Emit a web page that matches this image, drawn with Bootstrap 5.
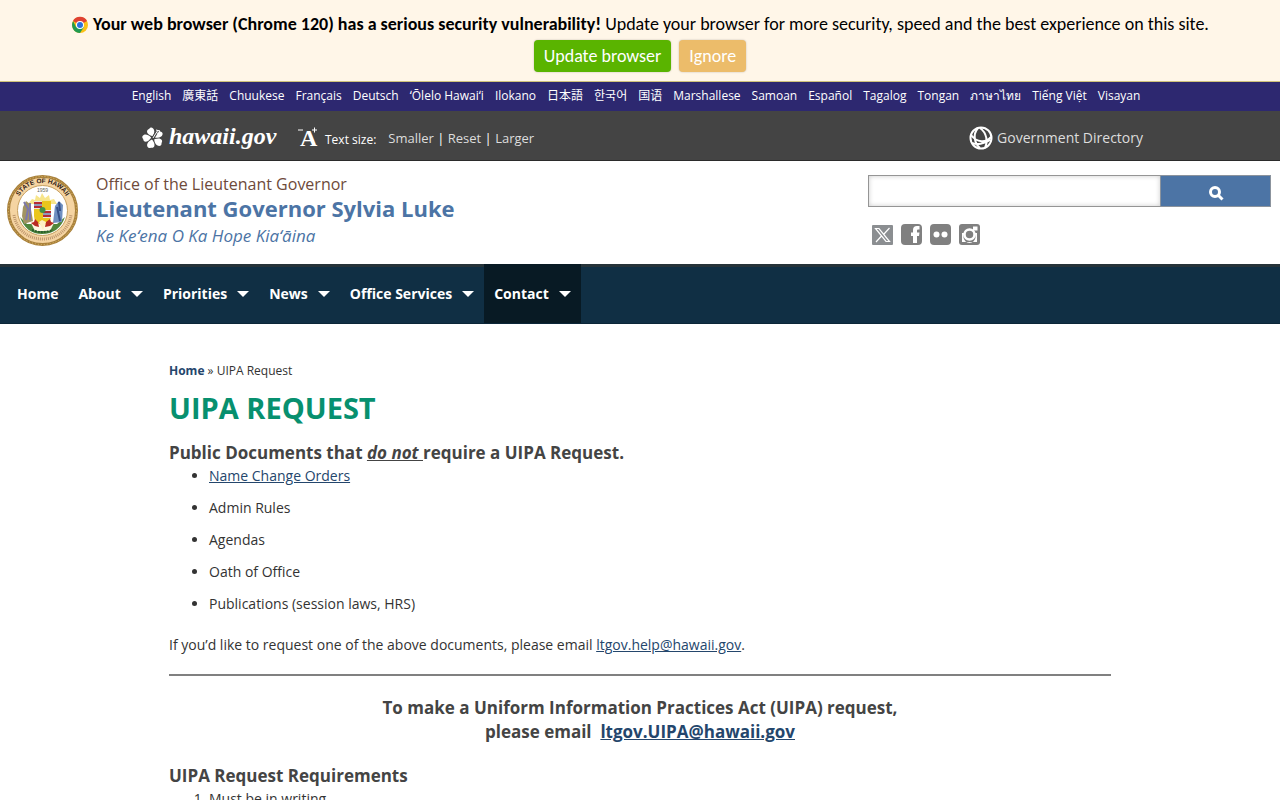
<!DOCTYPE html>
<html lang="en">
<head>
<meta charset="utf-8">
<meta name="viewport" content="width=device-width, initial-scale=1">
<title>UIPA Request</title>
<link href="https://cdn.jsdelivr.net/npm/bootstrap@5.3.0/dist/css/bootstrap.min.css" rel="stylesheet">
<style>
body{font-family:"Open Sans","Noto Sans","Noto Sans CJK JP",sans-serif;font-size:14px;line-height:24px;color:#333;background:#fff}
a{color:#24466c}
.update-bar{background:#fff6e8;border-bottom:1px solid #cfc27c;font-family:Calibri,Carlito,Lato,sans-serif;font-size:18px;line-height:24px;color:#000;padding:12px 12px 9px}
.update-bar .btn{font-family:inherit;font-size:18px;line-height:24px;padding:4px 10px;border:0;border-radius:4px;color:#fff;box-shadow:0 0 2px rgba(0,0,0,.25)}
.btn-update{background:#5ab400}
.btn-ignore{background:#ecbc6a}
.lang-bar{background:#2d2870;font-size:12px;line-height:16px;padding:6px 8px 7px 0}
.lang-list{gap:0 11px}
.lang-bar a{color:#fff}
.gov-bar{background:#444;border-bottom:1px solid #2b2b2b;min-height:50px;color:#fff;font-size:13px}
.gov-inner{max-width:1006px;padding-left:3px}
.gov-bar a{color:#ddd}
.gov-logo,.size-icon{font-family:"Liberation Serif",serif;font-weight:700;color:#fff}
.gov-logo text{font-style:italic}
.text-label{font-size:12px}
.text-sizes{margin-left:12px}
.directory{font-size:14px}
.site-head{padding:14px 9px 15px 7px}
.seal{margin-right:18px}
.office{font-size:16px;line-height:18px;color:#6e4a3a}
.officer{font-size:22px;line-height:30px;font-weight:700;color:#4c74a5}
.office-haw{font-size:17px;line-height:26px;font-style:italic;color:#4c74a5}
.search-zone{width:403px}
.search-zone .form-control{height:32px;border:1px solid #959595;border-right:0;border-radius:0;box-shadow:inset 0 0 5px rgba(0,0,0,.2)}
.search-zone .btn{flex:0 0 111px;border:1px solid #8b939d;border-radius:0;background:#4c74a5;color:#fff;padding:0}
.social{gap:7px;padding:17px 0 0 4px}
.main-nav{background:#102f44;border-top:3px solid #263339;border-bottom:1px solid #0b2638;padding:0 7px;min-height:60px}
.main-nav .nav-link{color:#fff;font-size:14px;font-weight:700;line-height:20px;padding:17px 10px 19px;gap:10px}
.main-nav .nav-link.active{background:#081a24;margin-top:-3px;padding-top:20px}
.page-body{max-width:942px}
.crumbs{font-size:12px;line-height:18px;margin:38px 0 8px}
.page-title{font-size:29px;line-height:40px;font-weight:700;color:#07906f;margin:0 0 13px}
.section-title{font-size:17px;line-height:24px;font-weight:700;color:#444;margin:0}
.doc-list{padding-left:40px;margin:1px 0 19px}
.doc-list li{line-height:20px;margin-bottom:12px}
.rule{border-top:2px solid #808080;opacity:1;margin:17px 0 20px}
</style>
</head>
<body>
<aside class="update-bar text-center" aria-label="Browser update">
  <div>
    <svg class="align-text-bottom me-1" width="18" height="22" viewBox="0 0 18 22" aria-hidden="true"><circle cx="9" cy="12" r="8" fill="#fbc116"/><path d="M9 12 2 8a8 8 0 0 1 14 0z" fill="#df4132"/><path d="M9 12 5 14 2.100 8A8 8 0 0 0 9 20l4-6z" fill="#219a50"/><circle cx="9" cy="12" r="4" fill="#fff"/><circle cx="9" cy="12" r="3" fill="#2a72dc"/></svg><b>Your web browser (Chrome 120) has a serious security vulnerability!</b> Update your browser for more security, speed and the best experience on this site.
  </div>
  <div class="d-flex justify-content-center gap-2 pt-1">
    <button type="button" class="btn btn-update">Update browser</button>
    <button type="button" class="btn btn-ignore">Ignore</button>
  </div>
</aside>
<nav class="lang-bar d-flex flex-wrap justify-content-center" aria-label="Languages">
  <div class="d-flex flex-wrap lang-list">
    <a class="text-decoration-none" href="#">English</a><a class="text-decoration-none" href="#" lang="zh-Hant">廣東話</a><a class="text-decoration-none" href="#">Chuukese</a><a class="text-decoration-none" href="#">Français</a><a class="text-decoration-none" href="#">Deutsch</a><a class="text-decoration-none" href="#">ʻŌlelo Hawaiʻi</a><a class="text-decoration-none" href="#">Ilokano</a><a class="text-decoration-none" href="#" lang="ja">日本語</a><a class="text-decoration-none" href="#" lang="ko">한국어</a><a class="text-decoration-none" href="#" lang="zh-Hans">国语</a><a class="text-decoration-none" href="#">Marshallese</a><a class="text-decoration-none" href="#">Samoan</a><a class="text-decoration-none" href="#">Español</a><a class="text-decoration-none" href="#">Tagalog</a><a class="text-decoration-none" href="#">Tongan</a><a class="text-decoration-none" href="#" lang="th">ภาษาไทย</a><a class="text-decoration-none" href="#">Tiếng Việt</a><a class="text-decoration-none" href="#">Visayan</a>
  </div>
</nav>
<div class="gov-bar d-flex align-items-center">
  <div class="gov-inner d-flex align-items-center w-100 mx-auto pt-1">
    <a class="gov-logo d-flex" href="#" aria-label="hawaii.gov"><svg width="140" height="32" viewBox="0 0 140 32"><g fill="#fff" transform="translate(13 16)"><path d="M-1-2C-7-4-7-8-4-9-2-13 4-9 0-2z"/><path d="M-1-2C-7-4-7-8-4-9-2-13 4-9 0-2z" transform="rotate(72)"/><path d="M-1-2C-7-4-7-8-4-9-2-13 4-9 0-2z" transform="rotate(144)"/><path d="M-1-2C-7-4-7-8-4-9-2-13 4-9 0-2z" transform="rotate(216)"/><path d="M-1-2C-7-4-7-8-4-9-2-13 4-9 0-2z" transform="rotate(288)"/><path d="m0 0 5-8" stroke="#444" stroke-width="3"/><path d="m0 0 5-8M3-8l4 1M4-5l3 1" stroke="#fff" stroke-width="1"/></g><text x="29" y="22" fill="#fff" font-size="24">hawaii.gov</text></svg></a>
    <svg class="size-icon ms-3" width="25" height="28" viewBox="0 0 25 28" aria-hidden="true"><text x="4" y="22" font-size="24" fill="#fff">A</text><path d="M2 6h5M16 6h5M18.500 3.500v5" stroke="#fff" fill="none"/></svg>
    <span class="text-label ms-1 pt-1">Text size:</span>
    <span class="text-sizes"><a class="text-decoration-none" href="#">Smaller</a> | <a class="text-decoration-none" href="#">Reset</a> | <a class="text-decoration-none" href="#">Larger</a></span>
    <a class="directory text-decoration-none d-flex align-items-center gap-1 ms-auto" href="#"><svg width="24" height="24" viewBox="0 0 24 24" fill="none" stroke="#fff" stroke-width="2" aria-hidden="true"><circle cx="12" cy="12" r="10.500"/><path d="M9 2C3 9 6 18 11 22M11 2c7 5 8 14 5 20M2 9c6 8 15 8 20 2M3 17c4 2 13 1 18-3"/></svg>Government Directory</a>
  </div>
</div>
<header class="site-head d-flex justify-content-between flex-wrap">
  <div class="d-flex">
    <svg class="seal" width="71" height="71" viewBox="0 0 71 71" role="img" aria-label="Seal of the State of Hawaii"><circle cx="35.500" cy="35.500" r="34" fill="#f5d4a2" stroke="#a9813c" stroke-width="3"/><circle cx="35.500" cy="35.500" r="34" fill="none" stroke="#dfbd69" stroke-dasharray="1 2"/><circle cx="35.500" cy="35.500" r="25" fill="#fff" stroke="#c7a060"/><path id="sealTop" d="M8 35.500a27.500 27.500 0 0 1 55 0" fill="none"/><text font-family="Liberation Sans" font-size="6.500" font-weight="700" fill="#302015" text-anchor="middle"><textPath href="#sealTop" startOffset="50%">STATE OF HAWAII</textPath></text><path d="M7 40c5 32 52 32 57 0" fill="none" stroke="#bd966d" stroke-width="3" stroke-dasharray="1 1"/><text x="35.500" y="17" font-family="Liberation Sans" font-size="5" fill="#665" text-anchor="middle">1959</text><path d="m21 29 4-5 3 1 1-5 4 3 2-5 3 5 4-3 1 5 4-1 3 5z" fill="#f7e58a"/><path d="M13 42q6 17 22 17 17 0 23-17l-8 7H20z" fill="#51863b"/><path d="M23 46h25l-5 10H28z" fill="#fff7e2"/><path d="m16 32 3-6 4 3 3 17-9 3-2-8z" fill="#a19462"/><path d="m17 27 4 7-2 11m4-17v17" stroke="#7c78ac" stroke-width="2" fill="none"/><path d="m48 31 4-5 4 4-1 17-9 1z" fill="#6f8fc0"/><path d="m50 32 3 14m-1-19 1 9" stroke="#344f87" stroke-width="2"/><path d="M27 26h17v15q0 7-8.500 9Q27 48 27 41z" fill="#eac61d"/><path d="M27 26h8v8h-8zM36 35h8v8h-8z" fill="#e9e5df"/><path d="M27 28h8m-8 4h8m1 5h8m-8 4h8" stroke="#b52c35" stroke-width="2"/><path d="M27 30h8m1 9h8" stroke="#354f94"/><circle cx="35.500" cy="35" r="3" fill="#439348"/><path d="m28 44 3 3 1 5-4-1-4-3 3-1zM43 44l-4 3-1 5 5-1 4-3-3-1z" fill="#b92b23"/><path d="m32 47 3-2 4 2-3 8z" fill="#fff0c5"/><path d="M25 55q10 4 21 0" stroke="#285d2c" stroke-width="2" stroke-dasharray="2 1" fill="none"/></svg>
    <div><div class="office">Office of the Lieutenant Governor</div><div class="officer">Lieutenant Governor Sylvia Luke</div><div class="office-haw">Ke Keʻena O Ka Hope Kiaʻāina</div></div>
  </div>
  <div class="search-zone">
    <form class="d-flex"><input class="form-control flex-fill" type="search" aria-label="Search this site"><button class="btn" type="submit" aria-label="Search"><svg width="16" height="16" viewBox="0 0 16 16" fill="none" stroke="#fff" stroke-width="3"><circle cx="7" cy="7" r="4.500"/><path d="m10.500 10.500 4 4"/></svg></button></form>
    <div class="d-flex social">
      <a class="d-flex" href="#" aria-label="X"><svg width="22" height="22" viewBox="0 0 22 22"><rect y="1" width="21" height="20" rx="1" fill="#8b8e91"/><path d="M3.500 4.500H7l10.500 13H14zM17.500 4 12 10M9.500 12 4 18" fill="none" stroke="#fff" stroke-width="1.200"/></svg></a>
      <a class="d-flex" href="#" aria-label="Facebook"><svg width="22" height="22" viewBox="0 0 22 22"><rect width="21" height="21" rx="4" fill="#808080"/><path d="M12 19v-7h-2V8.500h2V6q0-4 4-4h2.500v3.500H17q-1 0-1 1v2h2.500L18 12h-2v7z" fill="#fff"/></svg></a>
      <a class="d-flex" href="#" aria-label="Flickr"><svg width="22" height="22" viewBox="0 0 22 22"><rect width="21" height="21" rx="4" fill="#808080"/><circle cx="6.500" cy="10.500" r="3" fill="#fff"/><circle cx="14.500" cy="10.500" r="3" fill="#fff"/></svg></a>
      <a class="d-flex" href="#" aria-label="Instagram"><svg width="22" height="22" viewBox="0 0 22 22"><rect width="21" height="21" rx="3" fill="#808080"/><path d="M3 9v9h15V9h-3a6 6 0 1 1-9 0z" fill="#fff"/><circle cx="10.500" cy="10.500" r="5" fill="#808080" stroke="#fff" stroke-width="2.500"/><path d="M14 2.500h4.500v4H14z" fill="#fff"/></svg></a>
    </div>
  </div>
</header>
<nav class="main-nav" aria-label="Main">
  <ul class="nav">
    <li><a class="nav-link" href="#">Home</a></li>
    <li><a class="nav-link d-flex align-items-center" href="#">About <svg width="12" height="6" fill="#fff"><path d="M0 0h12L6 6z"/></svg></a></li>
    <li><a class="nav-link d-flex align-items-center" href="#">Priorities <svg width="12" height="6" fill="#fff"><path d="M0 0h12L6 6z"/></svg></a></li>
    <li><a class="nav-link d-flex align-items-center" href="#">News <svg width="12" height="6" fill="#fff"><path d="M0 0h12L6 6z"/></svg></a></li>
    <li><a class="nav-link d-flex align-items-center" href="#">Office Services <svg width="12" height="6" fill="#fff"><path d="M0 0h12L6 6z"/></svg></a></li>
    <li><a class="nav-link active d-flex align-items-center" href="#">Contact <svg width="12" height="6" fill="#fff"><path d="M0 0h12L6 6z"/></svg></a></li>
  </ul>
</nav>
<main class="page-body mx-auto">
  <div class="crumbs"><a class="fw-bold text-decoration-none" href="#">Home</a> » UIPA Request</div>
  <h1 class="page-title">UIPA REQUEST</h1>
  <h2 class="section-title">Public Documents that <u><em>do not </em></u>require a UIPA Request.</h2>
  <ul class="doc-list"><li><a href="#">Name Change Orders</a></li><li>Admin Rules</li><li>Agendas</li><li>Oath of Office</li><li>Publications (session laws, HRS)</li></ul>
  <p class="mb-0">If you’d like to request one of the above documents, please email <a href="#">ltgov.help@hawaii.gov</a>.</p>
  <hr class="rule">
  <h2 class="section-title text-center">To make a Uniform Information Practices Act (UIPA) request,<br>please email&nbsp; <a href="#">ltgov.UIPA@hawaii.gov</a></h2>
  <h2 class="section-title mt-3 pt-1">UIPA Request Requirements</h2>
  <ol class="doc-list"><li>Must be in writing.</li></ol>
</main>
<script src="https://cdn.jsdelivr.net/npm/bootstrap@5.3.0/dist/js/bootstrap.bundle.min.js"></script>
</body>
</html>
